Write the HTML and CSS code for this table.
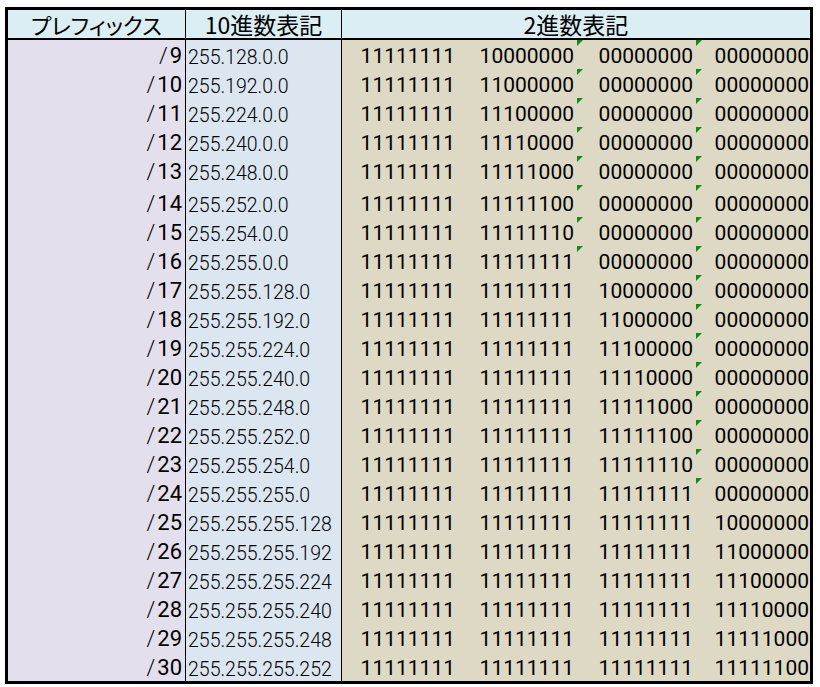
FILE: index.html
```html
<!DOCTYPE html>
<html lang="ja">
<head>
<meta charset="utf-8">
<title>サブネットマスク</title>
<link rel="stylesheet" href="styles.css">
</head>
<body>
<div class="sheet">
  <div class="h h-pf">プレフィックス</div>
  <div class="h h-dec">10進数表記</div>
  <div class="h h-bin">2進数表記</div>

  <div class="pf"><span class="sl">/</span>9</div><div class="dec">255.128.0.0</div><div class="bin">11111111</div><div class="bin">10000000</div><div class="bin z">00000000</div><div class="bin last z">00000000</div>
  <div class="pf"><span class="sl">/</span>10</div><div class="dec">255.192.0.0</div><div class="bin">11111111</div><div class="bin">11000000</div><div class="bin z">00000000</div><div class="bin last z">00000000</div>
  <div class="pf"><span class="sl">/</span>11</div><div class="dec">255.224.0.0</div><div class="bin">11111111</div><div class="bin">11100000</div><div class="bin z">00000000</div><div class="bin last z">00000000</div>
  <div class="pf"><span class="sl">/</span>12</div><div class="dec">255.240.0.0</div><div class="bin">11111111</div><div class="bin">11110000</div><div class="bin z">00000000</div><div class="bin last z">00000000</div>
  <div class="pf"><span class="sl">/</span>13</div><div class="dec">255.248.0.0</div><div class="bin">11111111</div><div class="bin">11111000</div><div class="bin z">00000000</div><div class="bin last z">00000000</div>
  <div class="pf"><span class="sl">/</span>14</div><div class="dec">255.252.0.0</div><div class="bin">11111111</div><div class="bin">11111100</div><div class="bin z">00000000</div><div class="bin last z">00000000</div>
  <div class="pf"><span class="sl">/</span>15</div><div class="dec">255.254.0.0</div><div class="bin">11111111</div><div class="bin">11111110</div><div class="bin z">00000000</div><div class="bin last z">00000000</div>
  <div class="pf"><span class="sl">/</span>16</div><div class="dec">255.255.0.0</div><div class="bin">11111111</div><div class="bin">11111111</div><div class="bin z">00000000</div><div class="bin last z">00000000</div>
  <div class="pf"><span class="sl">/</span>17</div><div class="dec">255.255.128.0</div><div class="bin">11111111</div><div class="bin">11111111</div><div class="bin">10000000</div><div class="bin last z">00000000</div>
  <div class="pf"><span class="sl">/</span>18</div><div class="dec">255.255.192.0</div><div class="bin">11111111</div><div class="bin">11111111</div><div class="bin">11000000</div><div class="bin last z">00000000</div>
  <div class="pf"><span class="sl">/</span>19</div><div class="dec">255.255.224.0</div><div class="bin">11111111</div><div class="bin">11111111</div><div class="bin">11100000</div><div class="bin last z">00000000</div>
  <div class="pf"><span class="sl">/</span>20</div><div class="dec">255.255.240.0</div><div class="bin">11111111</div><div class="bin">11111111</div><div class="bin">11110000</div><div class="bin last z">00000000</div>
  <div class="pf"><span class="sl">/</span>21</div><div class="dec">255.255.248.0</div><div class="bin">11111111</div><div class="bin">11111111</div><div class="bin">11111000</div><div class="bin last z">00000000</div>
  <div class="pf"><span class="sl">/</span>22</div><div class="dec">255.255.252.0</div><div class="bin">11111111</div><div class="bin">11111111</div><div class="bin">11111100</div><div class="bin last z">00000000</div>
  <div class="pf"><span class="sl">/</span>23</div><div class="dec">255.255.254.0</div><div class="bin">11111111</div><div class="bin">11111111</div><div class="bin">11111110</div><div class="bin last z">00000000</div>
  <div class="pf"><span class="sl">/</span>24</div><div class="dec">255.255.255.0</div><div class="bin">11111111</div><div class="bin">11111111</div><div class="bin">11111111</div><div class="bin last z">00000000</div>
  <div class="pf"><span class="sl">/</span>25</div><div class="dec">255.255.255.128</div><div class="bin">11111111</div><div class="bin">11111111</div><div class="bin">11111111</div><div class="bin last">10000000</div>
  <div class="pf"><span class="sl">/</span>26</div><div class="dec">255.255.255.192</div><div class="bin">11111111</div><div class="bin">11111111</div><div class="bin">11111111</div><div class="bin last">11000000</div>
  <div class="pf"><span class="sl">/</span>27</div><div class="dec">255.255.255.224</div><div class="bin">11111111</div><div class="bin">11111111</div><div class="bin">11111111</div><div class="bin last">11100000</div>
  <div class="pf"><span class="sl">/</span>28</div><div class="dec">255.255.255.240</div><div class="bin">11111111</div><div class="bin">11111111</div><div class="bin">11111111</div><div class="bin last">11110000</div>
  <div class="pf"><span class="sl">/</span>29</div><div class="dec">255.255.255.248</div><div class="bin">11111111</div><div class="bin">11111111</div><div class="bin">11111111</div><div class="bin last">11111000</div>
  <div class="pf"><span class="sl">/</span>30</div><div class="dec">255.255.255.252</div><div class="bin">11111111</div><div class="bin">11111111</div><div class="bin">11111111</div><div class="bin last">11111100</div>
</div>
</body>
</html>
```

FILE: styles.css
```css
html, body {
  margin: 0;
  padding: 0;
  background: #ffffff;
}

.sheet {
  display: grid;
  grid-template-columns: 178px 156px 116px 119px 119px 114px;
  grid-template-rows: 30px repeat(5, 29px) 32px repeat(16, 29px);
  width: 802px;
  margin: 7px 0 0 5px;
  border: 3px solid #000;
  color: #000;
}

.sheet > div {
  box-sizing: border-box;
  display: flex;
  align-items: flex-end;
  min-width: 0;
  white-space: nowrap;
}

.h {
  background: #daeef3;
  border-bottom: 2px solid #000;
  align-items: center !important;
  justify-content: center;
  font-family: "Noto Sans CJK JP", "Noto Sans", sans-serif;
  font-size: 23px;
  line-height: 23px;
  font-feature-settings: "palt";
}

.h-pf {
  font-size: 22px;
}

.h-pf,
.h-dec {
  border-right: 1px solid #000;
}

.h-bin {
  grid-column: 3 / span 4;
}

.pf {
  background: #e4dfec;
  border-right: 1px solid #000;
  justify-content: flex-end;
  padding: 0 3px 2px 0;
  font-family: Roboto, "Liberation Sans", sans-serif;
  font-variant-numeric: tabular-nums;
  font-size: 22px;
  line-height: 22px;
}

.sl {
  font-weight: 300;
  margin-right: 2px;
}

.dec {
  background: #dce6f1;
  border-right: 1px solid #000;
  padding: 0 0 2px 2px;
  font-family: Roboto, "Liberation Sans", sans-serif;
  font-variant-numeric: tabular-nums;
  font-weight: 300;
  font-size: 19.5px;
  line-height: 19px;
}

.bin {
  position: relative;
  background: #ddd9c4;
  justify-content: flex-end;
  padding: 0 3px 2px 0;
  font-family: Roboto, "Liberation Sans", sans-serif;
  font-variant-numeric: tabular-nums;
  font-size: 21px;
  line-height: 21px;
}

.bin.last {
  padding-right: 1px;
}

.z::before {
  content: "";
  position: absolute;
  left: 0;
  top: 0;
  width: 0;
  height: 0;
  border-top: 6px solid #138a13;
  border-right: 6px solid transparent;
}
```
